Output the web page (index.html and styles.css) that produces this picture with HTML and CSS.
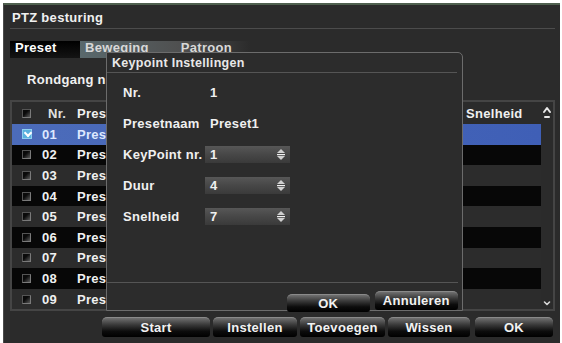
FILE: index.html
```html
<!DOCTYPE html>
<html lang="nl">
  <head>
    <meta charset="UTF-8" />
    <meta name="viewport" content="width=device-width, initial-scale=1.0" />
    <title>PTZ besturing</title>
    <link rel="stylesheet" href="styles.css">
  </head>
  <body>
    <div class="screen">
      <div class="title">PTZ besturing</div>

      <div class="tabs">
        <div class="tab active">Preset</div>
        <div class="tab-strip">
          <span class="tab">Beweging</span>
          <span class="tab">Patroon</span>
        </div>
      </div>

      <div class="tour-row">Rondgang nr.</div>

      <div class="table">
        <div class="table-body">
          <div class="row head">
            <div class="cell col-check"><span class="checkbox"></span></div>
            <div class="cell col-nr">Nr.</div>
            <div class="cell col-name">Presetnaam</div>
            <div class="cell col-mid"></div>
            <div class="cell col-speed">Snelheid</div>
          </div>
          <div class="row selected">
            <div class="cell col-check"><span class="checkbox checked"></span></div>
            <div class="cell col-nr">01</div>
            <div class="cell col-name">Preset1</div>
            <div class="cell col-mid"></div>
            <div class="cell col-speed"></div>
          </div>
          <div class="row">
            <div class="cell col-check"><span class="checkbox"></span></div>
            <div class="cell col-nr">02</div>
            <div class="cell col-name">Preset2</div>
            <div class="cell col-mid"></div>
            <div class="cell col-speed"></div>
          </div>
          <div class="row">
            <div class="cell col-check"><span class="checkbox"></span></div>
            <div class="cell col-nr">03</div>
            <div class="cell col-name">Preset3</div>
            <div class="cell col-mid"></div>
            <div class="cell col-speed"></div>
          </div>
          <div class="row">
            <div class="cell col-check"><span class="checkbox"></span></div>
            <div class="cell col-nr">04</div>
            <div class="cell col-name">Preset4</div>
            <div class="cell col-mid"></div>
            <div class="cell col-speed"></div>
          </div>
          <div class="row">
            <div class="cell col-check"><span class="checkbox"></span></div>
            <div class="cell col-nr">05</div>
            <div class="cell col-name">Preset5</div>
            <div class="cell col-mid"></div>
            <div class="cell col-speed"></div>
          </div>
          <div class="row">
            <div class="cell col-check"><span class="checkbox"></span></div>
            <div class="cell col-nr">06</div>
            <div class="cell col-name">Preset6</div>
            <div class="cell col-mid"></div>
            <div class="cell col-speed"></div>
          </div>
          <div class="row">
            <div class="cell col-check"><span class="checkbox"></span></div>
            <div class="cell col-nr">07</div>
            <div class="cell col-name">Preset7</div>
            <div class="cell col-mid"></div>
            <div class="cell col-speed"></div>
          </div>
          <div class="row">
            <div class="cell col-check"><span class="checkbox"></span></div>
            <div class="cell col-nr">08</div>
            <div class="cell col-name">Preset8</div>
            <div class="cell col-mid"></div>
            <div class="cell col-speed"></div>
          </div>
          <div class="row">
            <div class="cell col-check"><span class="checkbox"></span></div>
            <div class="cell col-nr">09</div>
            <div class="cell col-name">Preset9</div>
            <div class="cell col-mid"></div>
            <div class="cell col-speed"></div>
          </div>
        </div>
        <div class="scrollbar">
          <svg width="10" height="16" viewBox="0 0 10 16" fill="none" stroke="#e8e8e8" stroke-width="2" stroke-linecap="round" stroke-linejoin="round">
            <polyline points="2 7 5 3 8 7"></polyline>
            <line x1="3" y1="12" x2="7" y2="12"></line>
          </svg>
          <svg width="10" height="8" viewBox="0 0 10 8" fill="none" stroke="#d8d8d8" stroke-width="1.6" stroke-linecap="round" stroke-linejoin="round">
            <polyline points="2.5 3 5 5.5 7.5 3"></polyline>
          </svg>
        </div>
      </div>

      <div class="actions">
        <button class="btn btn-start">Start</button>
        <button class="btn btn-set">Instellen</button>
        <button class="btn btn-add">Toevoegen</button>
        <button class="btn btn-clear">Wissen</button>
        <button class="btn btn-ok">OK</button>
      </div>

      <div class="dialog">
        <div class="dialog-title">Keypoint Instellingen</div>
        <div class="dialog-fields">
          <div class="field field-nr">
            <span class="field-label">Nr.</span>
            <span class="field-value">1</span>
          </div>
          <div class="field field-name">
            <span class="field-label">Presetnaam</span>
            <span class="field-value">Preset1</span>
          </div>
          <div class="field">
            <span class="field-label">KeyPoint nr.</span>
            <div class="spinner">
              <span>1</span>
              <svg width="12" height="15" viewBox="0 0 12 15" fill="#d0d0d0">
                <polygon points="2 6 6 2 10 6"></polygon>
                <rect x="2" y="7" width="8" height="1.2" fill="#f0f0f0"></rect>
                <polygon points="2 9 6 13 10 9"></polygon>
              </svg>
            </div>
          </div>
          <div class="field">
            <span class="field-label">Duur</span>
            <div class="spinner">
              <span>4</span>
              <svg width="12" height="15" viewBox="0 0 12 15" fill="#d0d0d0">
                <polygon points="2 6 6 2 10 6"></polygon>
                <rect x="2" y="7" width="8" height="1.2" fill="#f0f0f0"></rect>
                <polygon points="2 9 6 13 10 9"></polygon>
              </svg>
            </div>
          </div>
          <div class="field">
            <span class="field-label">Snelheid</span>
            <div class="spinner">
              <span>7</span>
              <svg width="12" height="15" viewBox="0 0 12 15" fill="#d0d0d0">
                <polygon points="2 6 6 2 10 6"></polygon>
                <rect x="2" y="7" width="8" height="1.2" fill="#f0f0f0"></rect>
                <polygon points="2 9 6 13 10 9"></polygon>
              </svg>
            </div>
          </div>
        </div>
        <div class="dialog-footer">
          <button class="btn btn-dialog-ok">OK</button>
          <button class="btn btn-cancel">Annuleren</button>
        </div>
      </div>
    </div>
  </body>
</html>
```

FILE: styles.css
```css
body {
  margin: 0;
  padding: 0;
  background-color: #fff;
  font-family: "Liberation Sans", Arial, sans-serif;
  font-size: 13px;
  font-weight: bold;
  letter-spacing: 0.3px;
  color: #f0f0f0;
  overflow: hidden;
}

.screen {
  position: relative;
  box-sizing: border-box;
  margin: 3px 0 0 3px;
  width: 557px;
  height: 345px;
  background-color: #2b2b2b;
  border-top: 2px solid #4f604f;
  border-left: 1px solid #4a4a4a;
  display: flex;
  flex-direction: column;
}

.title {
  height: 23px;
  margin: 0 5px 0 6px;
  padding-left: 2px;
  border-bottom: 1px solid #4c4c4c;
  line-height: 25px;
}

.tabs {
  display: flex;
  height: 17px;
  margin: 12px 0 0 6px;
}

.tab {
  line-height: 14px;
  color: #d8d8d8;
}

.tab.active {
  width: 65px;
  padding-left: 5px;
  color: #fff;
  background: linear-gradient(#000, #141414);
}

.tab-strip {
  display: flex;
  gap: 32px;
  width: 165px;
  padding-left: 5px;
  background: linear-gradient(to right, rgba(92, 108, 112, 0.95), rgba(88, 88, 88, 0.8) 60%, rgba(70, 70, 70, 0));
}

.tour-row {
  height: 22px;
  margin: 11px 0 0 23px;
  line-height: 22px;
}

.table {
  display: flex;
  margin: 9px 5px 0 6px;
  border: 2px solid #454545;
  background-color: #2b2b2b;
}

.table-body {
  flex: 1;
}

.row {
  display: flex;
  height: 20.6px;
  align-items: center;
  background-color: #2c2c2c;
}

.row:nth-child(odd) {
  background-color: #070707;
}

.row.head {
  height: 22px;
  background-color: #2b2b2b;
}

.row.selected {
  background: linear-gradient(to right, #4c6cba, #3f5fb6);
  color: #dde8ff;
}

.cell {
  box-sizing: border-box;
  white-space: nowrap;
  overflow: hidden;
}

.col-check {
  width: 26px;
  padding-left: 10px;
  display: flex;
  align-items: center;
}

.col-nr {
  width: 36px;
  padding-left: 4px;
}

.head .col-nr {
  padding-left: 10px;
  color: #e0e0e0;
}

/* the dialog covers everything past the first letters of this column */
.col-name {
  width: 32px;
  padding-left: 3px;
}

.col-mid {
  flex: 1;
}

.col-speed {
  width: 78px;
  padding-left: 3px;
}

.checkbox {
  box-sizing: border-box;
  width: 9px;
  height: 9px;
  border: 1px solid #7a7a7a;
  border-top-color: #555;
  border-left-color: #555;
  background: linear-gradient(135deg, #0a0a0a 40%, #5a5a5a);
}

.checkbox.checked {
  width: 10px;
  height: 10px;
  border-color: #8fd0f0;
  background: #5ab2de;
  position: relative;
}

.checkbox.checked::after {
  content: "";
  position: absolute;
  left: 1px;
  top: 0;
  width: 4px;
  height: 4px;
  border-right: 2px solid #fff;
  border-bottom: 2px solid #fff;
  transform: translate(1px, 0) rotate(45deg);
}

.scrollbar {
  width: 12px;
  display: flex;
  flex-direction: column;
  align-items: center;
  justify-content: space-between;
  padding: 3px 0 2px;
}

.actions {
  display: flex;
  gap: 3px;
  margin-top: 6px;
  padding-left: 98px;
}

.btn {
  height: 20px;
  padding: 0;
  border: none;
  border-top: 1px solid #8a8a8a;
  border-radius: 5px 5px 3px 3px;
  background: linear-gradient(#707070, #3a3a3a 35%, #0c0c0c 70%, #000);
  color: #f2f2f2;
  font-family: inherit;
  font-size: 13px;
  font-weight: bold;
  letter-spacing: 0.3px;
  line-height: 19px;
  cursor: pointer;
}

.btn-start {
  width: 108px;
}

.btn-set {
  width: 84px;
}

.btn-add {
  width: 85px;
}

.btn-clear {
  width: 82px;
}

.btn-ok {
  width: 78px;
  margin-left: 2px;
}

.dialog {
  position: absolute;
  left: 102px;
  top: 47px;
  box-sizing: border-box;
  width: 357px;
  height: 259px;
  background-color: #2c2c2c;
  border: 1px solid #6c6c6c;
  border-radius: 0 5px 0 0;
  display: flex;
  flex-direction: column;
}

.dialog-title {
  height: 19px;
  margin-right: 5px;
  padding-left: 5px;
  border-bottom: 1px solid #555;
  line-height: 20px;
  font-size: 12.5px;
  color: #e8e8e8;
}

.dialog-fields {
  flex: 1;
  padding: 4px 0 0 16px;
}

.field {
  display: flex;
  align-items: center;
  height: 31px;
}

.field-nr {
  height: 30px;
}

.field-name {
  height: 32px;
}

.field-label {
  width: 82px;
}

.field-value {
  padding-left: 5px;
}

.spinner {
  box-sizing: border-box;
  display: flex;
  align-items: center;
  justify-content: space-between;
  width: 85px;
  height: 17px;
  padding: 0 3px 0 5px;
  background: linear-gradient(#575757, #474747 50%, #3a3a3a);
}

.dialog-footer {
  display: flex;
  align-items: flex-start;
  gap: 5px;
  height: 27px;
  margin-right: 4px;
  padding-left: 180px;
  border-top: 1px solid #555;
}

.btn-dialog-ok {
  width: 83px;
  height: 18px;
  margin-top: 11px;
  line-height: 18px;
}

.btn-cancel {
  width: 84px;
  height: 19px;
  margin-top: 8px;
  line-height: 18px;
}
```
